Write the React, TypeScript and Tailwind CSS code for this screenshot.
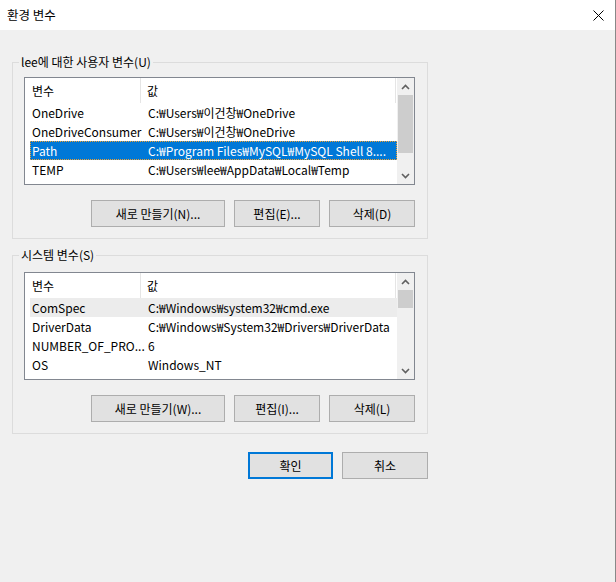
import React from "react";

type Row = { name: string; value: string; state?: "selected" | "hover" };

const userRows: Row[] = [
  { name: "OneDrive", value: "C:₩Users₩이건창₩OneDrive" },
  { name: "OneDriveConsumer", value: "C:₩Users₩이건창₩OneDrive" },
  { name: "Path", value: "C:₩Program Files₩MySQL₩MySQL Shell 8....", state: "selected" },
  { name: "TEMP", value: "C:₩Users₩lee₩AppData₩Local₩Temp" },
];

const systemRows: Row[] = [
  { name: "ComSpec", value: "C:₩Windows₩system32₩cmd.exe", state: "hover" },
  { name: "DriverData", value: "C:₩Windows₩System32₩Drivers₩DriverData" },
  { name: "NUMBER_OF_PRO...", value: "6" },
  { name: "OS", value: "Windows_NT" },
];

function Chevron({ up }: { up?: boolean }) {
  return (
    <svg width="9" height="6" viewBox="0 0 9 6">
      <path
        d={up ? "M1 5 L4.5 1.5 L8 5" : "M1 1 L4.5 4.5 L8 1"}
        fill="none"
        stroke="#606060"
        strokeWidth="1.6"
      />
    </svg>
  );
}

function ListView({ rows, thumbHeight }: { rows: Row[]; thumbHeight: number }) {
  return (
    <div className="w-[391px] h-[108px] border border-[#828790] bg-white flex overflow-hidden">
      <div className="flex-1 flex flex-col overflow-hidden">
        <div className="h-[25px] flex shrink-0">
          <div className="w-[116px] pl-[7px] border-r border-[#e5e5e5] flex items-center">변수</div>
          <div className="w-[255px] pl-[6px] border-r border-[#e5e5e5] flex items-center">값</div>
        </div>
        {rows.map((r) => (
          <div
            key={r.name}
            className={
              "h-[19px] ml-[5px] flex items-center shrink-0 " +
              (r.state === "selected"
                ? "bg-[#0078d7] text-white outline-1 outline-dotted outline-[#f0a030] -outline-offset-1"
                : r.state === "hover"
                ? "bg-[#ececec]"
                : "")
            }
          >
            <div className="w-[116px] pl-[2px] whitespace-nowrap overflow-hidden">{r.name}</div>
            <div className="flex-1 pl-[2px] whitespace-nowrap overflow-hidden">{r.value}</div>
          </div>
        ))}
      </div>
      <div className="w-[17px] bg-[#f0f0f0] flex flex-col shrink-0">
        <div className="h-[17px] flex items-center justify-center shrink-0">
          <Chevron up />
        </div>
        <div className="flex-1 relative">
          <div className="absolute top-0 left-[1px] right-[1px] bg-[#cdcdcd]" style={{ height: thumbHeight }} />
        </div>
        <div className="h-[17px] flex items-center justify-center shrink-0">
          <Chevron />
        </div>
      </div>
    </div>
  );
}

function Btn({ label, w, primary }: { label: string; w: string; primary?: boolean }) {
  return (
    <div
      className={
        "h-[27px] bg-[#e1e1e1] flex items-center justify-center " +
        w +
        (primary ? " border-2 border-[#0078d7]" : " border border-[#adadad]")
      }
    >
      {label}
    </div>
  );
}

function Group({
  title,
  rows,
  labels,
  thumbHeight,
  pt,
}: {
  title: string;
  rows: Row[];
  labels: string[];
  thumbHeight: number;
  pt: string;
}) {
  return (
    <div className={"relative w-[416px] border border-[#dcdcdc] pl-[11px] pb-[11px] " + pt}>
      <div className="absolute top-[-10px] left-[6px] px-[2px] bg-[#f0f0f0] leading-[18px]">{title}</div>
      <ListView rows={rows} thumbHeight={thumbHeight} />
      <div className="flex justify-end gap-[9px] mt-[15px] pr-[12px]">
        <Btn label={labels[0]} w="w-[134px]" />
        <Btn label={labels[1]} w="w-[86px]" />
        <Btn label={labels[2]} w="w-[86px]" />
      </div>
    </div>
  );
}

export default function App() {
  return (
    <div className="w-[616px] h-[582px] bg-[#f0f0f0] border-r border-[#888888] flex flex-col text-[12px] text-black font-['Noto_Sans_CJK_KR',sans-serif] overflow-hidden">
      <div className="h-[30px] bg-white flex items-center justify-between pl-[7px] pr-[11px] shrink-0">
        <span className="text-[12.5px]">환경 변수</span>
        <svg width="11" height="11" viewBox="0 0 11 11">
          <path d="M0.5 0.5 L10.5 10.5 M10.5 0.5 L0.5 10.5" stroke="#000" strokeWidth="1" />
        </svg>
      </div>
      <div className="pl-[12px] pt-[32px] flex flex-col">
        <Group
          title="lee에 대한 사용자 변수(U)"
          rows={userRows}
          labels={["새로 만들기(N)...", "편집(E)...", "삭제(D)"]}
          thumbHeight={58}
          pt="pt-[14px]"
        />
        <div className="mt-[16px]">
          <Group
            title="시스템 변수(S)"
            rows={systemRows}
            labels={["새로 만들기(W)...", "편집(I)...", "삭제(L)"]}
            thumbHeight={18}
            pt="pt-[16px]"
          />
        </div>
        <div className="w-[416px] flex justify-end gap-[9px] mt-[18px]">
          <Btn label="확인" w="w-[85px]" primary />
          <Btn label="취소" w="w-[86px]" />
        </div>
      </div>
    </div>
  );
}
